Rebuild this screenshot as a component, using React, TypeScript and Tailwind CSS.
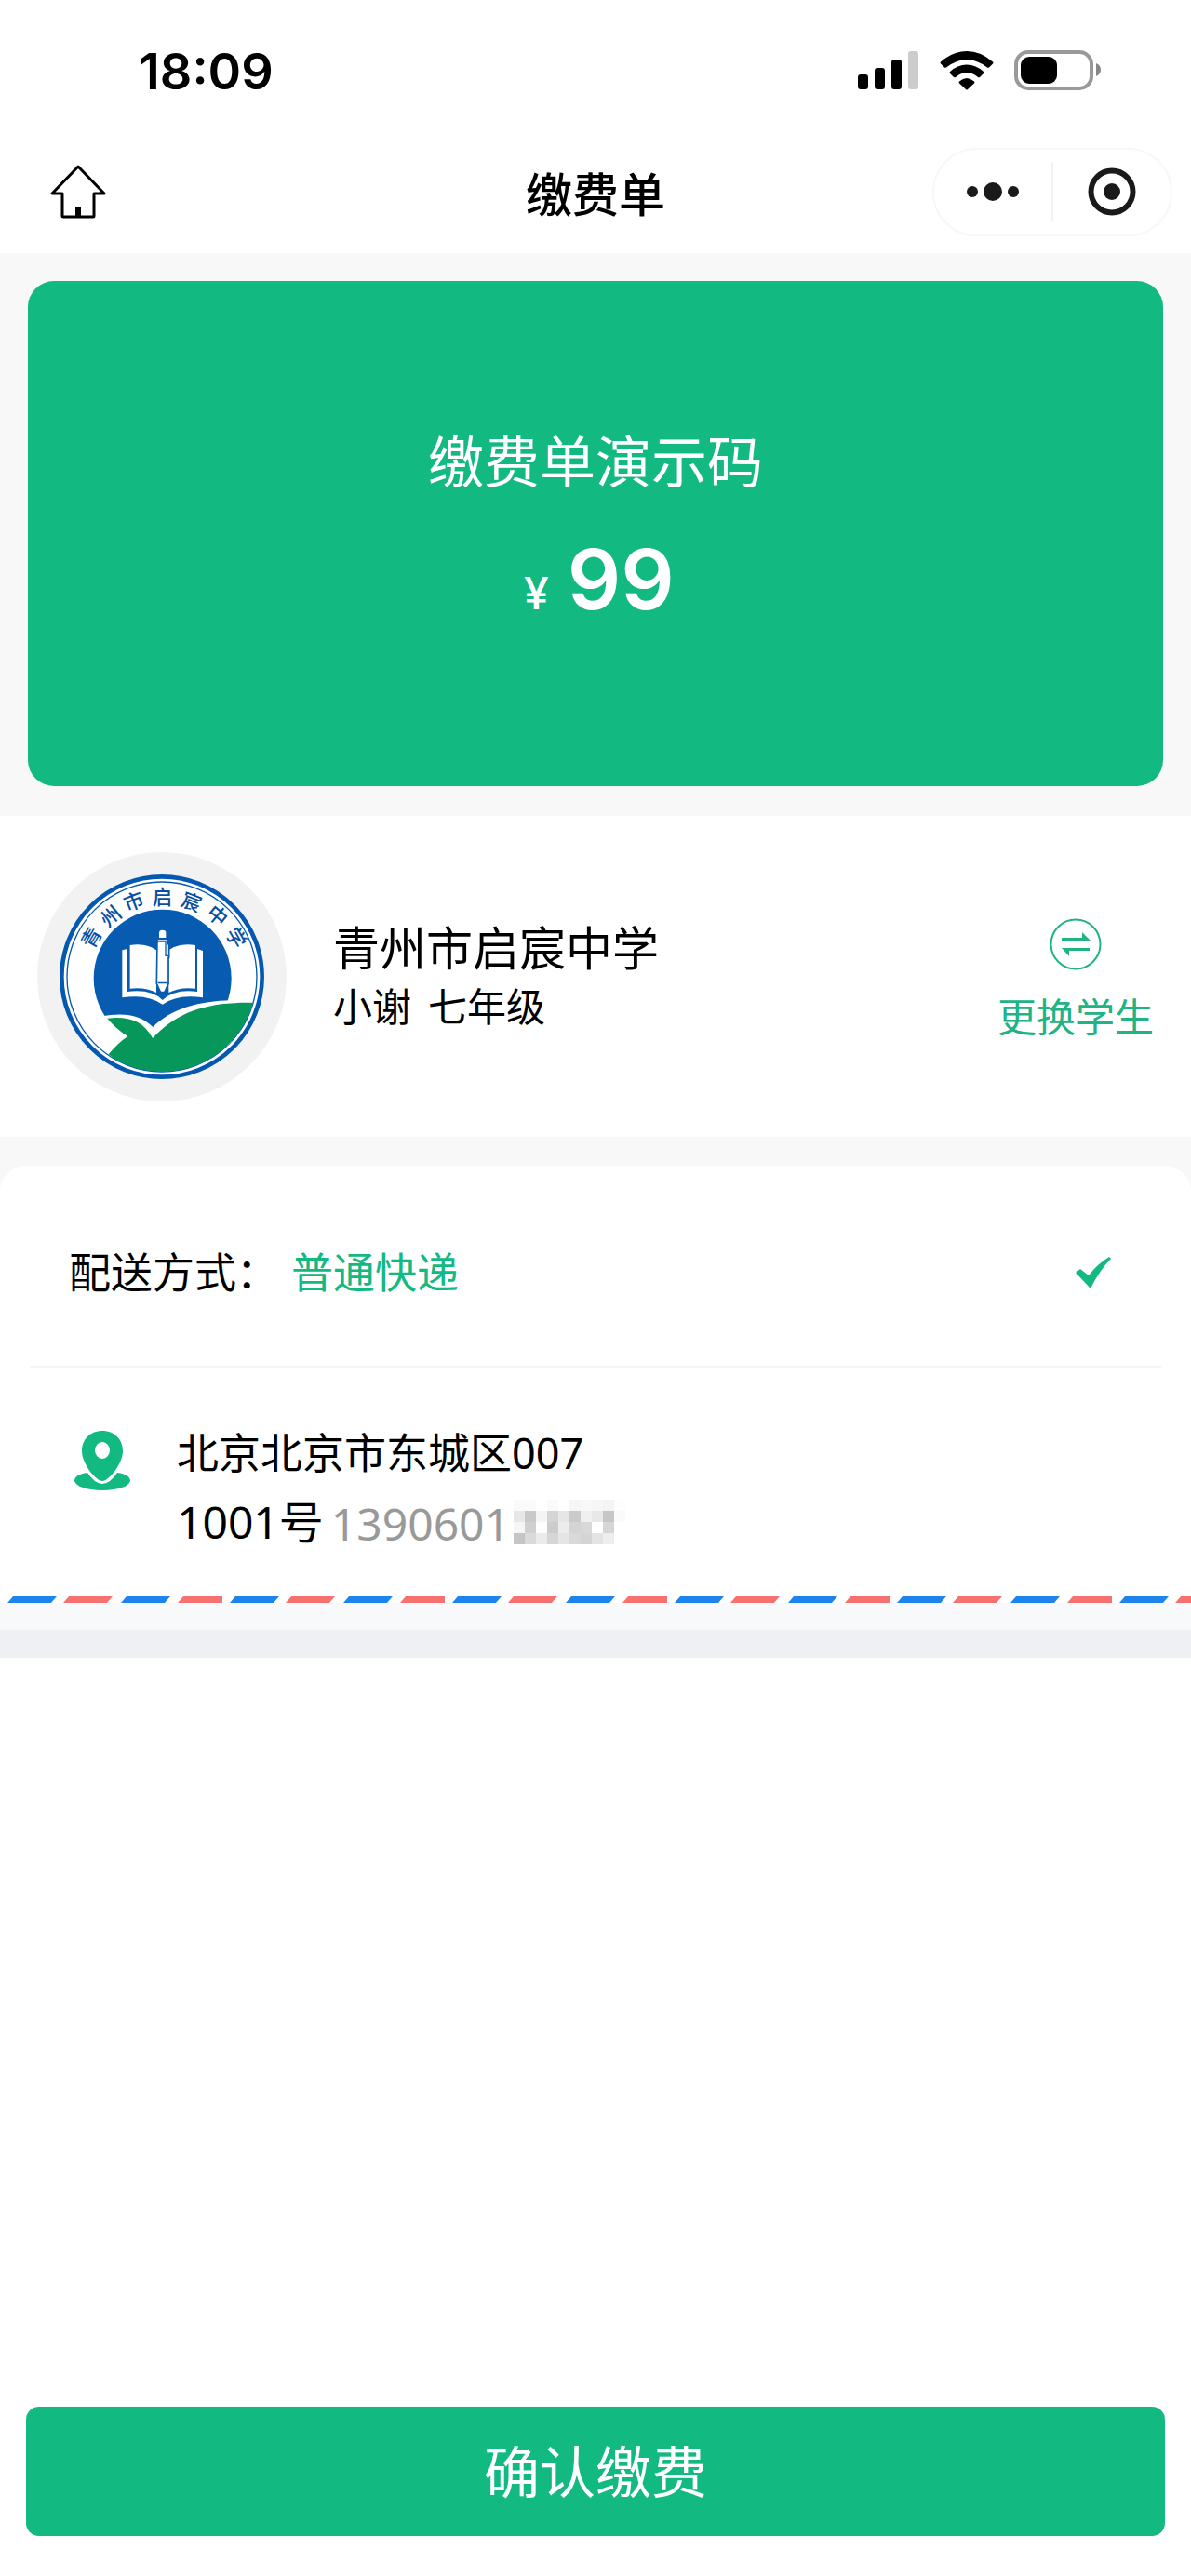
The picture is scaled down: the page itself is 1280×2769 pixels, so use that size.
const order = {
  title: "缴费单演示码",
  amount: "99",
  school: "青州市启宸中学",
  student: "小谢",
  grade: "七年级",
  delivery: "普通快递",
  address: "北京北京市东城区007",
  door: "1001号",
  phone: "1390601",
};

// characters round the top of the school badge: x, y, angle
const badgeText: [string, number, number, number][] = [
  ["青", 232, 352, -60],
  ["州", 295, 283, -40],
  ["市", 368, 235, -21],
  ["启", 460, 220, 0],
  ["宸", 554, 237, 21],
  ["中", 638, 281, 40],
  ["学", 698, 352, 60],
];

// grey values of the masked digits
const maskRows = [
  ["#fafafa", "#fafafa", "#fff", "#fafafa", "#fff", "#f6f6f6", "#f8f8f8", "#f6f6f6", "#f4f4f4", "#fdfdfd"],
  ["#e7e7e7", "#c9c9c9", "#f4f4f4", "#d4d4d4", "#e6e6e6", "#cacaca", "#f0f0f0", "#e8e8e8", "#c6c6c6", "#fafafa"],
  ["#f6f6f6", "#d0d0d0", "#fdfdfd", "#cccccc", "#ededed", "#d4d4d4", "#d8d8d8", "#fff", "#d6d6d6", "#fff"],
  ["#c5c5c5", "#dadada", "#ebebeb", "#d6d6d6", "#e5e5e5", "#d9d9d9", "#d4d4d4", "#e4e4e4", "#eeeeee", "#fff"],
];

function StatusBar() {
  return (
    <div className="flex h-[140px] items-center justify-between pt-3 pr-24 pl-[149px]">
      <span className="pt-0.5 font-['Inter',sans-serif] text-[54px] leading-none font-semibold">
        18:09
      </span>

      <div className="flex items-center gap-[22px]">
        <svg width="66" height="42" viewBox="0 0 66 42" aria-hidden="true">
          <rect x="0" y="25" width="11" height="16" rx="3" />
          <rect x="18" y="18" width="11" height="23" rx="3" />
          <rect x="36" y="9" width="11" height="32" rx="3" />
          <rect x="54" y="0" width="11" height="41" rx="3" fill="#ccc" />
        </svg>

        <svg width="58" height="42" viewBox="0 0 58 42" aria-hidden="true">
          <path d="M1 11.500Q14 0 29 0T57 11.500Q58 12.500 57 13.500L53 17.500Q52 18 51 17.500Q40 9 29 9T7 17.500Q6 18 5 17.500L1 13.500Q0 12.500 1 11.500Z" />
          <path d="M11 22Q19 14.500 29 14.500T47 22Q48 23 47 24L43 28Q42 28.500 41 28Q35 23 29 23T17 28Q16 28.500 15 28L11 24Q10 23 11 22Z" />
          <path d="M21 32.500Q29 25.500 37 32.500Q38 33.500 37 34.500L30 41Q29 42 28 41L21 34.500Q20 33.500 21 32.500Z" />
        </svg>

        <svg width="94" height="44" viewBox="0 0 94 44" aria-hidden="true">
          <rect x="2" y="2" width="81" height="39" rx="13" fill="none" stroke="#999" strokeWidth="4" />
          <rect x="7" y="7" width="39" height="29" rx="9" />
          <path d="M88 14Q93 16 93 21T88 28Z" fill="#888" />
        </svg>
      </div>
    </div>
  );
}

function NavBar() {
  return (
    <header className="grid h-[132px] grid-cols-[1fr_auto_1fr] items-center px-5">
      <button type="button" aria-label="首页" className="ml-[34px] justify-self-start">
        <svg width="60" height="60" viewBox="0 0 60 60" fill="none" stroke="#000" strokeWidth="3" strokeLinejoin="round">
          <path d="M30 3L2 32H13V56Q13 57 14 57H46Q47 57 47 56V32H58Z" />
          <path d="M30 46V57" strokeWidth="6" />
        </svg>
      </button>

      <h1 className="text-[50px] leading-[60px] font-medium">
        缴费单
      </h1>

      <div className="flex h-[95px] w-[258px] items-center justify-self-end rounded-full border-2 border-[#f7f7f7]">
        <button type="button" aria-label="更多" className="flex h-16 flex-1 items-center justify-center border-r-2 border-[#f2f2f2]">
          <svg width="56" height="20" viewBox="0 0 56 20" fill="#1a1a1a">
            <circle cx="6" cy="10" r="6" />
            <circle cx="28" cy="10" r="10" />
            <circle cx="50" cy="10" r="6" />
          </svg>
        </button>

        <button type="button" aria-label="关闭" className="flex h-16 flex-1 items-center justify-center">
          <svg width="52" height="52" viewBox="0 0 52 52">
            <circle cx="26" cy="26" r="22.500" fill="none" stroke="#1a1a1a" strokeWidth="6" />
            <circle cx="26" cy="26" r="9" fill="#1a1a1a" />
          </svg>
        </button>
      </div>
    </header>
  );
}

function SchoolBadge() {
  return (
    <svg className="shrink-0" width="268" height="268" viewBox="57 76 804 804" role="img" aria-label={order.school}>
      <defs>
        <clipPath id="badge-inner">
          <circle cx="459" cy="478" r="306" />
        </clipPath>
      </defs>

      <circle cx="459" cy="478" r="402" fill="#f2f2f2" />
      <circle cx="459" cy="478" r="323" fill="#fff" stroke="#0558b0" strokeWidth="14" />
      <circle cx="459" cy="478" r="306" fill="none" stroke="#0558b0" strokeWidth="4" />
      <circle cx="461" cy="483" r="222" fill="#075cb2" />

      <g clipPath="url(#badge-inner)">
        <path d="M262 606C335 592 390 600 430 640C490 580 580 556 684 554L684 700H262Z" fill="#fff" />
        <path d="M283 612C350 604 400 620 429 676C500 600 590 556 758 562C730 690 620 784 459 784C390 784 330 765 287 728Q318 690 349 670Q310 645 283 612Z" fill="#07975a" />
      </g>

      {/* open book */}
      <path d="M331 392L347 388V526Q425 516 461 553Q500 516 573 526V388L591 394V545Q510 532 461 567Q412 532 331 545Z" fill="#fff" />
      <path d="M356 376Q410 368 441 392V529Q405 510 356 516Z" fill="#fff" />
      <path d="M481 392Q512 368 567 376V516Q518 510 481 529Z" fill="#fff" />

      {/* pen */}
      <path d="M450 352V336Q450 327 461 327T472 336V352Z" fill="#fff" />
      <path d="M444 356H478V372H482V416H480V500L461 542L442 500Z" fill="#fff" stroke="#075cb2" strokeWidth="5" />
      <path d="M444 364H471V410H480M442 492H480M446 498H478" fill="none" stroke="#075cb2" strokeWidth="4" />
      <path d="M454 525H468L461 541Z" fill="#075cb2" />

      {badgeText.map(([char, x, y, angle]) => (
        <text
          key={char}
          transform={`translate(${x} ${y}) rotate(${angle})`}
          textAnchor="middle"
          y="23"
          fontSize="64"
          fontWeight="500"
          fill="#0a4ea3"
        >
          {char}
        </text>
      ))}
    </svg>
  );
}

function MaskedDigits() {
  return (
    <svg width="120" height="48" viewBox="0 0 120 48" shapeRendering="crispEdges" aria-hidden="true">
      {maskRows.map((row, y) =>
        row.map((color, x) => (
          <rect key={`${x}-${y}`} x={x * 12} y={y * 12} width="12" height="12" fill={color} />
        ))
      )}
    </svg>
  );
}

function AirmailStripe() {
  return (
    <svg className="block h-[7px] w-full" aria-hidden="true">
      <defs>
        <pattern id="airmail" x="8" y="0" width="239" height="7" patternUnits="userSpaceOnUse">
          <path d="M6 0H53L47 7H0ZM128 0H175L169 7H122Z" fill="#1e84ec" />
          <path d="M66 0H113L107 7H60ZM189 0H231V7H183Z" fill="#f87171" />
        </pattern>
      </defs>
      <rect width="100%" height="7" fill="url(#airmail)" />
    </svg>
  );
}

export default function App() {
  return (
    <div className="flex min-h-screen flex-col bg-white font-['Noto_Sans_CJK_SC',sans-serif] text-black">
      <StatusBar />
      <NavBar />

      <main className="flex grow flex-col">
        <div className="bg-[#f8f8f8] px-[30px] pt-[30px] pb-8">
          <section className="flex h-[543px] flex-col items-center rounded-[28px] bg-[#12b981] pt-[153px] text-white">
            <h2 className="text-[60px] leading-[76px]">
              {order.title}
            </h2>

            <p className="mt-[38px] flex items-baseline gap-5 pl-2 font-['Inter',sans-serif] leading-[108px]">
              <span className="text-[48px] font-medium">¥</span>
              <span className="text-[90px] font-semibold">{order.amount}</span>
            </p>
          </section>
        </div>

        <section className="flex h-[345px] items-center px-10">
          <SchoolBadge />

          <div className="ml-[50px] flex-1 pb-1">
            <h2 className="text-[50px] leading-[64px]">
              {order.school}
            </h2>
            <p className="flex gap-[18px] text-[42px] leading-[64px]">
              <span>{order.student}</span>
              <span>{order.grade}</span>
            </p>
          </div>

          <button type="button" className="flex flex-col items-center gap-[18px] pt-2 text-[#20b384]">
            <svg width="56" height="56" viewBox="0 0 56 56" fill="currentColor" aria-hidden="true">
              <circle cx="28" cy="28" r="26.500" fill="none" stroke="currentColor" strokeWidth="2" />
              <path d="M13 21H35V15L44 24H13ZM43 35H21V41L13 32H43Z" />
            </svg>
            <span className="text-[42px] leading-[60px]">更换学生</span>
          </button>
        </section>

        <div className="bg-[#f8f8f8] pt-[31px]">
          <section className="rounded-t-[28px] bg-white">
            <div className="mx-8 flex h-[217px] items-center border-b-2 border-[#f5f5f5] pr-[54px] pl-[42px] text-[45px] leading-[60px]">
              <span className="pt-2.5">配送方式：</span>
              <span className="ml-[14px] flex-1 pt-2.5 text-[#12b981]">{order.delivery}</span>
              <svg className="mt-3.5" width="38" height="34" viewBox="0 0 38 34" fill="#12b981" aria-hidden="true">
                <path d="M0 17L5 13L14 20Q23 8 36 0L38 2Q26 14 16 34Z" />
              </svg>
            </div>

            <div className="flex h-[246px] items-start gap-[50px] px-20 pt-16">
              <svg className="mt-1" width="60" height="64" viewBox="0 0 60 64" fill="#12b981" aria-hidden="true">
                <path d="M14 45Q22 57 30 57T46 45Q60 47 60 54Q57 63 30 64Q3 63 0 54Q0 47 14 45Z" />
                <path
                  d="M30 0C17 0 8 9 8 22C8 35 23 54 30 54S52 35 52 22C52 9 43 0 30 0ZM30 12A8 9 0 1 1 30 30A8 9 0 1 1 30 12Z"
                  fillRule="evenodd"
                />
              </svg>

              <address className="font-['Noto_Sans','Noto_Sans_CJK_SC',sans-serif] leading-[72px] not-italic">
                <p className="-mt-2 text-[45px]">{order.address}</p>
                <p className="flex items-center text-[48px]">
                  {order.door}
                  <span className="ml-2 pt-1 pr-1 text-[#999]">{order.phone}</span>
                  <MaskedDigits />
                </p>
              </address>
            </div>

            <AirmailStripe />
          </section>
        </div>

        <div className="h-[29px] bg-[#f8f9fa]" />
        <div className="h-[30px] bg-[#eff0f4]" />

        <div className="mt-auto px-7 pb-[43px]">
          <button type="button" className="h-[139px] w-full rounded-[14px] bg-[#12b981] pb-1.5 text-[60px] leading-none text-white">
            确认缴费
          </button>
        </div>
      </main>
    </div>
  );
}
